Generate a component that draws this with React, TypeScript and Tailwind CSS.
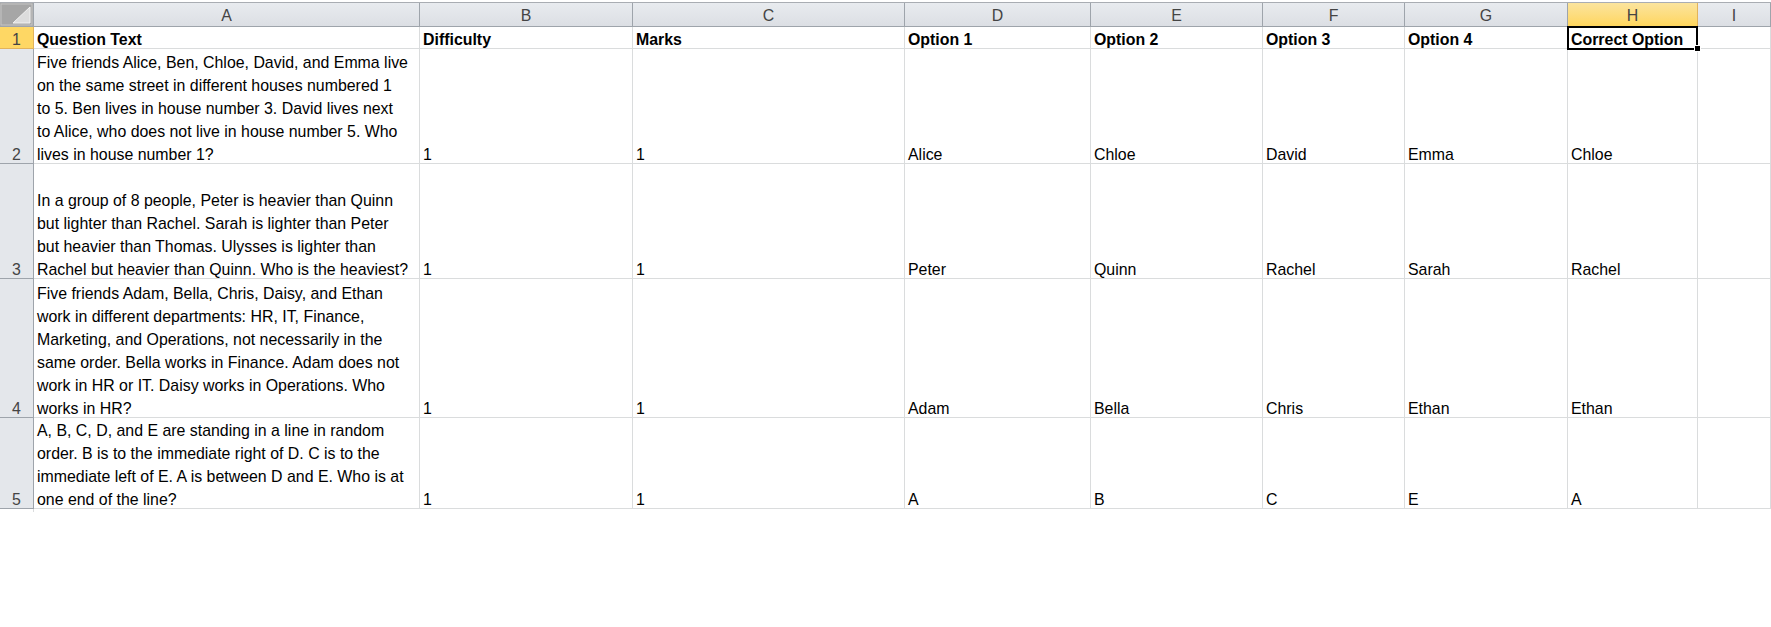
const cols = ["A", "B", "C", "D", "E", "F", "G", "H", "I"];

const rows = [
  {
    h: "h-[115px]",
    q: [
      "Five friends Alice, Ben, Chloe, David, and Emma live",
      "on the same street in different houses numbered 1",
      "to 5. Ben lives in house number 3. David lives next",
      "to Alice, who does not live in house number 5. Who",
      "lives in house number 1?",
    ],
    opts: ["Alice", "Chloe", "David", "Emma", "Chloe"],
  },
  {
    h: "h-[115px]",
    q: [
      "In a group of 8 people, Peter is heavier than Quinn",
      "but lighter than Rachel. Sarah is lighter than Peter",
      "but heavier than Thomas. Ulysses is lighter than",
      "Rachel but heavier than Quinn. Who is the heaviest?",
    ],
    opts: ["Peter", "Quinn", "Rachel", "Sarah", "Rachel"],
  },
  {
    h: "h-[139px]",
    q: [
      "Five friends Adam, Bella, Chris, Daisy, and Ethan",
      "work in different departments: HR, IT, Finance,",
      "Marketing, and Operations, not necessarily in the",
      "same order. Bella works in Finance. Adam does not",
      "work in HR or IT. Daisy works in Operations. Who",
      "works in HR?",
    ],
    opts: ["Adam", "Bella", "Chris", "Ethan", "Ethan"],
  },
  {
    h: "h-[91px]",
    q: [
      "A, B, C, D, and E are standing in a line in random",
      "order. B is to the immediate right of D. C is to the",
      "immediate left of E. A is between D and E. Who is at",
      "one end of the line?",
    ],
    opts: ["A", "B", "C", "E", "A"],
  },
];

const headers = ["Question Text", "Difficulty", "Marks", "Option 1", "Option 2", "Option 3", "Option 4"];

const cell = "flex items-end whitespace-nowrap border-r border-b border-[#dadcdd] pl-[3px]";
const rowHead = "flex items-end justify-center border-r border-b border-[#9ea4ab] bg-[#e4e7eb] text-[#444]";

// text sits a little low in its cell, like Excel's bottom alignment
const Txt = ({ children }: { children: React.ReactNode }) => <div className="-mb-[3px]">{children}</div>;

export default function App() {
  return (
    <div className="h-[627px] w-[1771px] overflow-hidden bg-white pt-[2px] font-['Liberation_Sans',Arial,sans-serif] text-[15.9px] leading-[23px] text-black">
      <div className="grid grid-cols-[34px_386px_213px_272px_186px_172px_142px_163px_130px_1fr] border-t border-[#a9adb3]">
        {/* column headers */}
        <div className="h-[24px] border-r border-b border-[#9ea4ab] bg-[#b8b8b8]">
          <svg width="33" height="23" viewBox="0 0 33 23">
            <rect x="0" y="0" width="33" height="23" fill="#a6a6a6" />
            <rect x="1" y="1" width="31" height="21" fill="none" stroke="#c4c4c4" />
            <polygon points="13,20 30,4 30,20" fill="#dcdcdc" stroke="#f2f2f2" strokeWidth="1" />
          </svg>
        </div>
        {cols.map((c) =>
          c === "H" ? (
            <div
              key={c}
              className="flex h-[24px] items-center justify-center border-r border-b border-[#e2b35b] bg-gradient-to-b from-[#fbe49d] to-[#ffd65c] pt-[2px] text-[#444]"
            >
              {c}
            </div>
          ) : (
            <div
              key={c}
              className="flex h-[24px] items-center justify-center border-r border-b border-[#9ea4ab] bg-gradient-to-b from-[#e8ebef] to-[#dcdfe4] pt-[2px] text-[#444]"
            >
              {c}
            </div>
          )
        )}

        {/* row 1 */}
        <div className="flex h-[22px] items-end justify-center border-r border-b border-[#e2b35b] bg-[#fed764] text-[#444]">
          <Txt>1</Txt>
        </div>
        {headers.map((t) => (
          <div key={t} className={`${cell} h-[22px] font-bold`}>
            <Txt>{t}</Txt>
          </div>
        ))}
        <div className={`${cell} relative h-[22px] font-bold`}>
          <Txt>Correct Option</Txt>
          <div className="absolute -top-[1px] -left-[1px] h-[24px] w-[131px] border-2 border-black" />
          <div className="absolute -right-[4px] -bottom-[4px] h-[7px] w-[7px] border border-white bg-black" />
        </div>
        <div className={`${cell} h-[22px]`} />

        {/* data rows */}
        {rows.map((r, i) => (
          <div key={i} className="contents">
            <div className={`${rowHead} ${r.h}`}>
              <Txt>{i + 2}</Txt>
            </div>
            <div className={`${cell} ${r.h}`}>
              <Txt>
                {r.q.map((l) => (
                  <div key={l}>{l}</div>
                ))}
              </Txt>
            </div>
            <div className={`${cell} ${r.h}`}>
              <Txt>1</Txt>
            </div>
            <div className={`${cell} ${r.h}`}>
              <Txt>1</Txt>
            </div>
            {r.opts.map((o, j) => (
              <div key={j} className={`${cell} ${r.h}`}>
                <Txt>{o}</Txt>
              </div>
            ))}
            <div className={`${cell} ${r.h}`} />
          </div>
        ))}
      </div>
      <div className="ml-[33px] h-[3px] w-px bg-[#dadcdd]" />
    </div>
  );
}
